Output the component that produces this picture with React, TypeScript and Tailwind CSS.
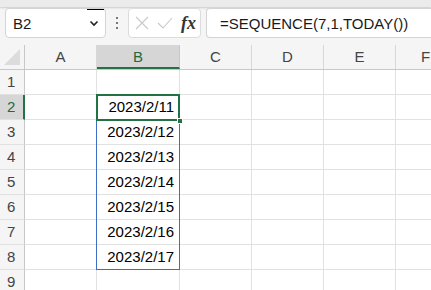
import React from "react";

const cols = [
  { key: "A", w: "w-[72px]" },
  { key: "B", w: "w-[83px]" },
  { key: "C", w: "w-[72px]" },
  { key: "D", w: "w-[72px]" },
  { key: "E", w: "w-[72px]" },
  { key: "F", w: "w-[60px]" },
];

const dates: Record<number, string> = {
  2: "2023/2/11",
  3: "2023/2/12",
  4: "2023/2/13",
  5: "2023/2/14",
  6: "2023/2/15",
  7: "2023/2/16",
  8: "2023/2/17",
};

export default function App() {
  const font = { fontFamily: '"Liberation Sans", Arial, sans-serif' };
  return (
    <div
      className="w-[431px] h-[290px] overflow-hidden bg-[#f5f5f5] flex flex-col"
      style={font}
    >
      {/* top band */}
      <div className="h-[7px] bg-[#ebebeb] shadow-[0_1px_2px_rgba(0,0,0,0.18)] shrink-0" />
      {/* toolbar */}
      <div className="flex items-center h-[30px] mt-[1px] pl-[5px] shrink-0">
        <div className="relative w-[101px] h-[30px] rounded-[4px] border border-[#d4d4d4] bg-white flex items-center pl-[7px] pr-[6px]">
          <span className="text-[15px] text-[#1a1a1a] leading-none flex-1">B2</span>
          <svg width="10" height="7" viewBox="0 0 10 7">
            <path d="M1.5 1.5 L5 5 L8.5 1.5" fill="none" stroke="#222" strokeWidth="1.6" />
          </svg>
          <div className="absolute top-[0px] right-[1px] w-[17px] h-[1px] bg-black" />
        </div>
        <div className="w-[22px] flex flex-col items-center gap-[3px]">
          <div className="w-[2px] h-[2px] bg-[#777]" />
          <div className="w-[2px] h-[2px] bg-[#777]" />
          <div className="w-[2px] h-[2px] bg-[#777]" />
        </div>
        <div className="w-[73px] h-[30px] rounded-[4px] border border-[#dcdcdc] bg-white flex items-center pl-[5px] pr-[4px]">
          <svg width="14" height="14" viewBox="0 0 14 14" className="ml-[1px]">
            <path d="M1 1 L13 13 M13 1 L1 13" stroke="#c8c8c8" strokeWidth="1.1" fill="none" />
          </svg>
          <svg width="16" height="12" viewBox="0 0 16 12" className="ml-[8px]">
            <path d="M1 6 L6 11 L15 1" stroke="#c8c8c8" strokeWidth="1.1" fill="none" />
          </svg>
          <span
            className="ml-auto text-[18px] italic font-bold text-[#333] leading-none"
            style={{ fontFamily: '"Liberation Serif", "Times New Roman", serif' }}
          >
            fx
          </span>
        </div>
        <div className="ml-[5px] flex-1 h-[30px] rounded-l-[4px] border border-r-0 border-[#d4d4d4] bg-white flex items-center pl-[13px]">
          <span className="text-[15px] text-[#1a1a1a] leading-none whitespace-nowrap">
            =SEQUENCE(7,1,TODAY())
          </span>
        </div>
      </div>
      {/* grid */}
      <div className="relative mt-[7px] bg-white flex-1">
        {/* header row */}
        <div className="flex h-[25px] border-b border-[#c8c8c8] bg-[#f5f5f5]">
          <div className="relative w-[25px] h-full border-r border-[#c8c8c8] shrink-0">
            <svg width="18" height="18" viewBox="0 0 18 18" className="absolute right-[3px] bottom-[3px]">
              <path d="M17 1 L17 17 L1 17 Z" fill="#dcdcdc" />
            </svg>
          </div>
          {cols.map((c) => (
            <div
              key={c.key}
              className={`${c.w} shrink-0 h-full flex items-center justify-center text-[15px] ${
                c.key === "B"
                  ? "bg-[#d6d6d6] text-[#1d6b3f] border-b-2 border-[#217346] border-r border-r-[#c8c8c8]"
                  : "text-[#444] border-r border-[#d8d8d8]"
              }`}
            >
              <span className={c.key === "B" ? "mt-[2px]" : ""}>{c.key}</span>
            </div>
          ))}
        </div>
        {[1, 2, 3, 4, 5, 6, 7, 8, 9].map((r) => (
          <div key={r} className="flex h-[25px]">
            <div
              className={`w-[25px] shrink-0 h-full flex items-center pl-[7px] text-[15px] border-b border-[#e1e1e1] ${
                r === 2
                  ? "bg-[#d6d6d6] text-[#1d6b3f] border-r-2 border-r-[#217346]"
                  : "bg-[#f5f5f5] text-[#444] border-r border-r-[#c8c8c8]"
              }`}
            >
              {r}
            </div>
            {cols.map((c) => (
              <div
                key={c.key}
                className={`${c.w} shrink-0 h-full border-r border-b border-[#e1e1e1] flex items-center justify-end pr-[5px] text-[15px] text-black`}
              >
                {c.key === "B" && dates[r] ? dates[r] : ""}
              </div>
            ))}
          </div>
        ))}
        {/* blue range border B3:B8 */}
        <div className="absolute left-[96px] top-[75px] w-[84px] h-[150px] border border-[#3d6fc6] pointer-events-none" />
        {/* active cell B2 */}
        <div className="absolute left-[96px] top-[49px] w-[84px] h-[27px] border-2 border-[#217346] pointer-events-none" />
        {/* fill handle */}
        <div className="absolute left-[177px] top-[73px] w-[6px] h-[6px] bg-[#217346] border border-white" />
      </div>
    </div>
  );
}
